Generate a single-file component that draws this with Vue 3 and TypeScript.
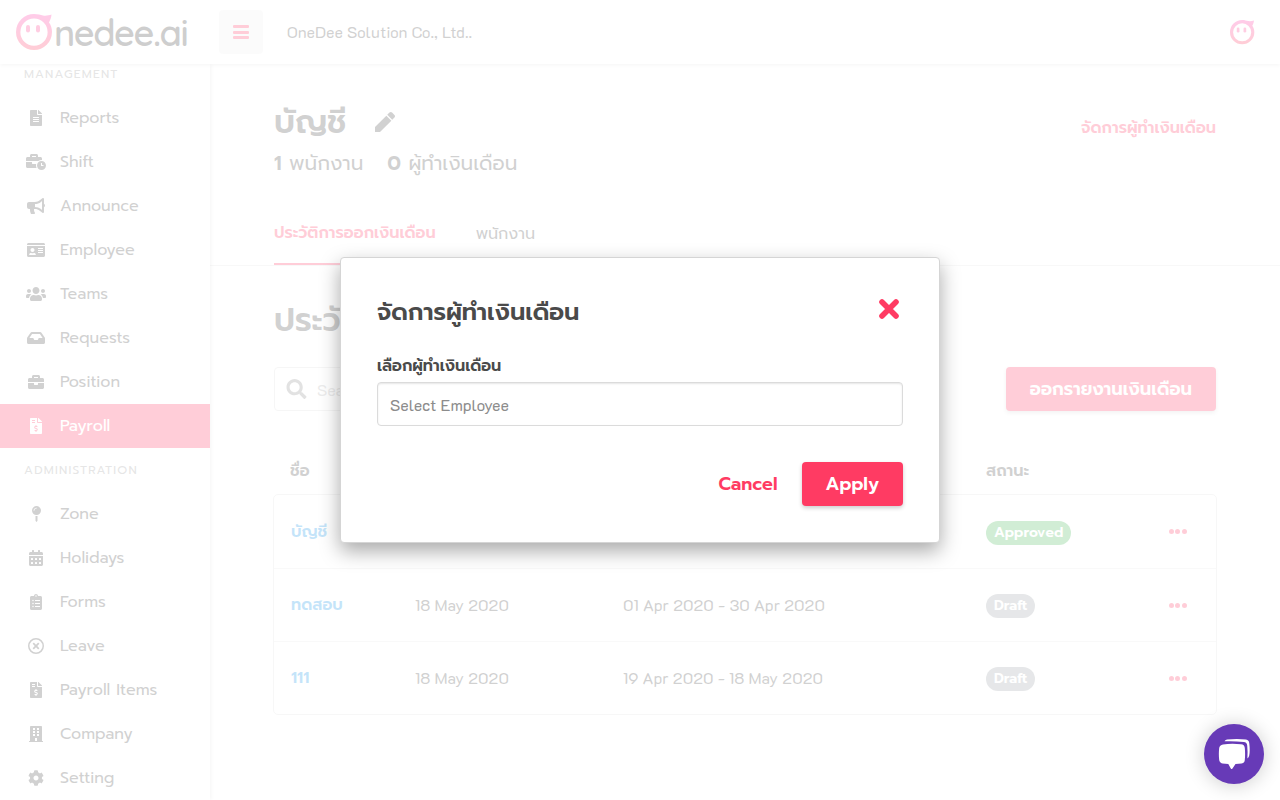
<script setup lang="ts">
interface Icon { vb: string; w: number; d: string }
interface MenuItem { label: string; icon: Icon; active?: boolean }
interface Row { name: string; date: string; period: string; status: string }

const mk = (w: number, d: string): Icon => ({ vb: `0 0 ${w} 512`, w: (w / 512) * 16, d })

const invoice = mk(384, 'M377 105L279.1 7c-4.5-4.5-10.6-7-17-7H256v128h128v-6.1c0-6.3-2.5-12.4-7-16.9zm-153 31V0H24C10.7 0 0 10.7 0 24v464c0 13.3 10.7 24 24 24h336c13.3 0 24-10.7 24-24V160H248c-13.2 0-24-10.8-24-24zM64 72c0-4.42 3.58-8 8-8h80c4.42 0 8 3.58 8 8v16c0 4.42-3.58 8-8 8H72c-4.42 0-8-3.58-8-8V72zm0 80v-16c0-4.42 3.58-8 8-8h80c4.42 0 8 3.58 8 8v16c0 4.42-3.58 8-8 8H72c-4.42 0-8-3.58-8-8zm144 263.88V440c0 4.42-3.58 8-8 8h-16c-4.42 0-8-3.58-8-8v-24.29c-11.29-.58-22.27-4.52-31.37-11.35-3.9-2.93-4.1-8.77-.57-12.14l11.75-11.21c2.77-2.64 6.89-2.76 10.13-.73 3.87 2.42 8.26 3.72 12.82 3.72h28.11c6.5 0 11.8-5.92 11.8-13.19 0-5.95-3.61-11.19-8.77-12.73l-45-13.5c-18.59-5.58-31.58-23.42-31.58-43.39 0-24.52 19.05-44.44 42.67-45.07V232c0-4.42 3.58-8 8-8h16c4.42 0 8 3.58 8 8v24.29c11.29.58 22.27 4.51 31.37 11.35 3.9 2.93 4.1 8.77.57 12.14l-11.75 11.21c-2.77 2.64-6.89 2.76-10.13.73-3.87-2.43-8.26-3.72-12.82-3.72h-28.11c-6.5 0-11.8 5.92-11.8 13.19 0 5.95 3.61 11.19 8.77 12.73l45 13.5c18.59 5.58 31.58 23.42 31.58 43.39 0 24.53-19.05 44.44-42.67 45.07z')

const management: MenuItem[] = [
  { label: 'Reports', icon: mk(384, 'M224 136V0H24C10.7 0 0 10.7 0 24v464c0 13.3 10.7 24 24 24h336c13.3 0 24-10.7 24-24V160H248c-13.200 0-24-10.800-24-24zm64 236c0 6.600-5.400 12-12 12H108c-6.600 0-12-5.400-12-12v-8c0-6.600 5.400-12 12-12h168c6.600 0 12 5.400 12 12v8zm0-64c0 6.600-5.400 12-12 12H108c-6.600 0-12-5.400-12-12v-8c0-6.600 5.400-12 12-12h168c6.600 0 12 5.400 12 12v8zm0-72v8c0 6.600-5.400 12-12 12H108c-6.600 0-12-5.400-12-12v-8c0-6.600 5.400-12 12-12h168c6.600 0 12 5.400 12 12zm96-114.100v6.100H256V0h6.100c6.400 0 12.500 2.500 17 7l97.900 98c4.500 4.500 7 10.600 7 16.900z') },
  { label: 'Shift', icon: mk(640, 'M496 224c-79.59 0-144 64.41-144 144s64.41 144 144 144 144-64.41 144-144-64.41-144-144-144zm64 150.29c0 5.34-4.37 9.71-9.71 9.71h-60.57c-5.34 0-9.71-4.37-9.71-9.71v-76.57c0-5.34 4.37-9.71 9.71-9.71h12.57c5.34 0 9.71 4.37 9.71 9.71V352h38.29c5.34 0 9.71 4.37 9.71 9.71v12.58zM496 192c5.4 0 10.72.33 16 .81V144c0-25.6-22.4-48-48-48h-80V48c0-25.6-22.4-48-48-48H176c-25.6 0-48 22.4-48 48v48H48c-25.6 0-48 22.4-48 48v80h395.12c28.6-20.09 63.35-32 100.88-32zM320 96H192V64h128v32zm6.82 224H208c-8.84 0-16-7.16-16-16v-48H0v144c0 25.6 22.4 48 48 48h291.43C327.1 423.96 320 396.82 320 368c0-16.66 2.48-32.72 6.82-48z') },
  { label: 'Announce', icon: mk(576, 'M576 240c0-23.63-12.95-44.04-32-55.12V32.01C544 23.26 537.02 0 512 0c-7.12 0-14.19 2.38-19.98 7.02l-85.03 68.03C364.28 109.19 310.66 128 256 128H64c-35.35 0-64 28.65-64 64v96c0 35.35 28.65 64 64 64h33.7c-1.39 10.48-2.18 21.14-2.18 32 0 39.77 9.26 77.35 25.56 110.94 5.19 10.69 16.52 17.06 28.4 17.06h74.28c26.05 0 41.69-29.84 25.9-50.56-16.4-21.52-26.15-48.36-26.15-77.44 0-11.11 1.62-21.79 4.41-32H256c54.66 0 108.28 18.81 150.98 52.95l85.03 68.03a32.023 32.023 0 0 0 19.98 7.02c24.92 0 32-22.78 32-32V295.13C563.05 284.04 576 263.63 576 240zm-96 141.42l-33.05-26.44C392.95 311.78 325.12 288 256 288v-96c69.12 0 136.95-23.78 190.95-66.98L480 98.58v282.84z') },
  { label: 'Employee', icon: mk(576, 'M528 32H48C21.5 32 0 53.5 0 80v16h576V80c0-26.5-21.5-48-48-48zM0 432c0 26.5 21.5 48 48 48h480c26.5 0 48-21.5 48-48V128H0v304zm352-232c0-4.4 3.6-8 8-8h144c4.4 0 8 3.6 8 8v16c0 4.4-3.6 8-8 8H360c-4.4 0-8-3.600-8-8v-16zm0 64c0-4.400 3.600-8 8-8h144c4.400 0 8 3.600 8 8v16c0 4.400-3.600 8-8 8H360c-4.400 0-8-3.600-8-8v-16zm0 64c0-4.400 3.600-8 8-8h144c4.400 0 8 3.600 8 8v16c0 4.400-3.600 8-8 8H360c-4.400 0-8-3.600-8-8v-16zM176 192c35.300 0 64 28.700 64 64s-28.700 64-64 64-64-28.700-64-64 28.700-64 64-64zM67.100 396.200C75.500 370.500 99.600 352 128 352h8.200c12.300 5.100 25.700 8 39.800 8s27.600-2.900 39.800-8h8.200c28.400 0 52.500 18.500 60.900 44.200 3.200 9.900-5.200 19.800-15.600 19.800H82.700c-10.400 0-18.800-10-15.600-19.800z') },
  { label: 'Teams', icon: mk(640, 'M96 224c35.3 0 64-28.7 64-64s-28.7-64-64-64-64 28.7-64 64 28.7 64 64 64zm448 0c35.3 0 64-28.7 64-64s-28.7-64-64-64-64 28.7-64 64 28.7 64 64 64zm32 32h-64c-17.6 0-33.5 7.1-45.1 18.6 40.3 22.1 68.9 62 75.1 109.4h66c17.7 0 32-14.3 32-32v-32c0-35.3-28.7-64-64-64zm-256 0c61.9 0 112-50.1 112-112S381.9 32 320 32 208 82.1 208 144s50.1 112 112 112zm76.800 32h-8.300c-20.800 10-43.900 16-68.500 16s-47.600-6-68.500-16h-8.300C179.600 288 128 339.600 128 403.200V432c0 26.500 21.500 48 48 48h288c26.500 0 48-21.500 48-48v-28.800c0-63.600-51.600-115.200-115.200-115.200zm-223.700-13.400C161.500 263.100 145.600 256 128 256H64c-35.300 0-64 28.700-64 64v32c0 17.700 14.300 32 32 32h65.900c6.300-47.400 34.900-87.300 75.200-109.400z') },
  { label: 'Requests', icon: mk(576, 'M567.938 243.908L462.25 85.374A48.003 48.003 0 0 0 422.311 64H153.689a48 48 0 0 0-39.938 21.374L8.062 243.908A47.994 47.994 0 0 0 0 270.533V400c0 26.51 21.49 48 48 48h480c26.51 0 48-21.49 48-48V270.533a47.994 47.994 0 0 0-8.062-26.625zM162.252 128h251.497l85.333 128H376l-32 64H232l-32-64H76.918l85.334-128z') },
  { label: 'Position', icon: mk(512, 'M320 336c0 8.84-7.16 16-16 16h-96c-8.84 0-16-7.16-16-16v-48H0v144c0 25.6 22.4 48 48 48h416c25.6 0 48-22.4 48-48V288H320v48zm144-208h-80V80c0-25.6-22.4-48-48-48H176c-25.6 0-48 22.4-48 48v48H48c-25.6 0-48 22.4-48 48v80h512v-80c0-25.600-22.400-48-48-48zm-144 0H192V96h128v32z') },
  { label: 'Payroll', icon: invoice, active: true },
]

const administration: MenuItem[] = [
  { label: 'Zone', icon: mk(288, 'M112 316.94v156.69l22.02 33.02c4.75 7.12 15.22 7.12 19.97 0L176 473.63V316.94c-10.39 1.92-21.06 3.06-32 3.06s-21.61-1.14-32-3.06zM144 0C64.47 0 0 64.47 0 144s64.47 144 144 144 144-64.47 144-144S223.53 0 144 0zm0 76c-37.5 0-68 30.5-68 68 0 6.62-5.38 12-12 12s-12-5.38-12-12c0-50.73 41.28-92 92-92 6.62 0 12 5.38 12 12s-5.38 12-12 12z') },
  { label: 'Holidays', icon: mk(448, 'M400 64h-48V16c0-8.8-7.2-16-16-16h-32c-8.8 0-16 7.2-16 16v48H160V16c0-8.8-7.2-16-16-16h-32c-8.8 0-16 7.2-16 16v48H48C21.5 64 0 85.5 0 112v48h448v-48c0-26.5-21.5-48-48-48zM0 192v272c0 26.5 21.5 48 48 48h352c26.5 0 48-21.5 48-48V192zM76 256h40q12 0 12 12v40q0 12-12 12h-40q-12 0-12-12v-40q0-12 12-12zM204 256h40q12 0 12 12v40q0 12-12 12h-40q-12 0-12-12v-40q0-12 12-12zM332 256h40q12 0 12 12v40q0 12-12 12h-40q-12 0-12-12v-40q0-12 12-12zM76 384h40q12 0 12 12v40q0 12-12 12h-40q-12 0-12-12v-40q0-12 12-12zM204 384h40q12 0 12 12v40q0 12-12 12h-40q-12 0-12-12v-40q0-12 12-12zM332 384h40q12 0 12 12v40q0 12-12 12h-40q-12 0-12-12v-40q0-12 12-12z') },
  { label: 'Forms', icon: mk(384, 'M336 64h-80c0-35.3-28.7-64-64-64s-64 28.7-64 64H48C21.5 64 0 85.5 0 112v352c0 26.5 21.5 48 48 48h288c26.5 0 48-21.5 48-48V112c0-26.500-21.500-48-48-48zM96 424c-13.300 0-24-10.700-24-24s10.700-24 24-24 24 10.700 24 24-10.700 24-24 24zm0-96c-13.300 0-24-10.700-24-24s10.700-24 24-24 24 10.700 24 24-10.700 24-24 24zm0-96c-13.300 0-24-10.700-24-24s10.700-24 24-24 24 10.700 24 24-10.700 24-24 24zm96-192c13.300 0 24 10.700 24 24s-10.700 24-24 24-24-10.700-24-24 10.700-24 24-24zm128 368c0 4.400-3.600 8-8 8H168c-4.400 0-8-3.600-8-8v-16c0-4.400 3.600-8 8-8h144c4.400 0 8 3.600 8 8v16zm0-96c0 4.400-3.600 8-8 8H168c-4.400 0-8-3.600-8-8v-16c0-4.400 3.600-8 8-8h144c4.400 0 8 3.600 8 8v16zm0-96c0 4.400-3.600 8-8 8H168c-4.400 0-8-3.600-8-8v-16c0-4.400 3.600-8 8-8h144c4.400 0 8 3.600 8 8v16z') },
  { label: 'Leave', icon: mk(512, 'M256 0a256 256 0 1 0 0 512a256 256 0 1 0 0-512zM256 48a208 208 0 1 1 0 416a208 208 0 1 1 0-416zM357.800 193.800L295.600 256l62.200 62.200c4.700 4.700 4.700 12.300 0 17l-22.600 22.600c-4.700 4.700-12.300 4.700-17 0L256 295.600l-62.200 62.200c-4.700 4.700-12.300 4.700-17 0l-22.600-22.600c-4.700-4.700-4.700-12.300 0-17l62.200-62.200-62.200-62.200c-4.700-4.700-4.700-12.300 0-17l22.600-22.600c4.700-4.700 12.300-4.700 17 0l62.200 62.200 62.200-62.200c4.700-4.700 12.300-4.700 17 0l22.600 22.600c4.700 4.700 4.700 12.300 0 17z') },
  { label: 'Payroll Items', icon: invoice },
  { label: 'Company', icon: mk(448, 'M436 480h-20V24c0-13.300-10.700-24-24-24H56C42.700 0 32 10.700 32 24v456H12c-6.600 0-12 5.400-12 12v20h448v-20c0-6.600-5.400-12-12-12zM128 64h64v64h-64zM256 64h64v64h-64zM128 160h64v64h-64zM256 160h64v64h-64zM128 256h64v64h-64zM256 256h64v64h-64zM192 384h64v96h-64z') },
  { label: 'Setting', icon: mk(512, 'M487.4 315.700l-42.600-24.600c4.300-23.200 4.300-47 0-70.200l42.600-24.600c4.900-2.800 7.100-8.600 5.500-14-11.100-35.600-30-67.800-54.700-94.600-3.800-4.100-10-5.100-14.800-2.300L380.800 110c-17.900-15.400-38.500-27.300-60.800-35.100V25.800c0-5.600-3.900-10.500-9.400-11.700-36.700-8.200-74.300-7.800-109.200 0-5.500 1.200-9.400 6.100-9.400 11.700V75c-22.200 7.900-42.800 19.800-60.800 35.100L88.700 85.500c-4.900-2.800-11-1.900-14.800 2.300-24.700 26.700-43.600 58.900-54.700 94.600-1.700 5.400.6 11.200 5.500 14L67.300 221c-4.300 23.200-4.300 47 0 70.200l-42.600 24.600c-4.900 2.800-7.100 8.600-5.500 14 11.100 35.600 30 67.800 54.700 94.600 3.800 4.100 10 5.100 14.800 2.300l42.600-24.600c17.900 15.400 38.500 27.300 60.800 35.100v49.200c0 5.600 3.900 10.500 9.400 11.700 36.700 8.200 74.300 7.800 109.200 0 5.500-1.200 9.400-6.100 9.400-11.700v-49.200c22.200-7.900 42.800-19.800 60.800-35.100l42.600 24.600c4.900 2.800 11 1.900 14.800-2.300 24.700-26.700 43.600-58.900 54.700-94.600 1.500-5.500-.7-11.300-5.600-14.100zM256 336c-44.100 0-80-35.900-80-80s35.900-80 80-80 80 35.900 80 80-35.900 80-80 80z') },
]

const sections = [
  { title: 'MANAGEMENT', items: management },
  { title: 'ADMINISTRATION', items: administration },
]

const rows: Row[] = [
  { name: 'บัญชี', date: '18 May 2020', period: '01 May 2020 - 31 May 2020', status: 'Approved' },
  { name: 'ทดสอบ', date: '18 May 2020', period: '01 Apr 2020 - 30 Apr 2020', status: 'Draft' },
  { name: '111', date: '18 May 2020', period: '19 Apr 2020 - 18 May 2020', status: 'Draft' },
]
</script>

<template>
  <div class="app">
    <header class="topbar">
      <div class="logo">
        <svg class="logo-mark" viewBox="0 0 37 37">
          <defs>
            <linearGradient id="brand" x1="0" y1="0" x2="0" y2="1">
              <stop offset="0" stop-color="#ff35a8" />
              <stop offset="1" stop-color="#ff3b5c" />
            </linearGradient>
          </defs>
          <path fill="url(#brand)" fill-rule="evenodd" d="M18 0C22 0 24.500 1 27 1.500C30 2 33 1.300 35.500.6C35.300 4 34 6.500 33 8.500C35 11 36 14.500 36 18A18 18 0 1 1 18 0zM18 4.600A13.600 13.600 0 1 0 18 31.800A13.600 13.600 0 1 0 18 4.600z" />
          <rect x="10" y="11" width="4" height="7.500" rx="2" fill="#ff3b8c" />
          <rect x="20" y="11" width="4" height="7.500" rx="2" fill="#ff3b8c" />
        </svg>
        <span class="logo-text">nedee.ai</span>
      </div>
      <button class="burger" aria-label="Menu"><i /><i /><i /></button>
      <span class="company">OneDee Solution Co., Ltd..</span>
      <svg class="avatar" viewBox="0 0 37 37">
        <path fill="url(#brand)" fill-rule="evenodd" d="M18 0C22 0 24.500 1 27 1.500C30 2 33 1.300 35.500.6C35.300 4 34 6.500 33 8.500C35 11 36 14.500 36 18A18 18 0 1 1 18 0zM18 4.800A13.400 13.400 0 1 0 18 31.600A13.400 13.400 0 1 0 18 4.800z" />
        <rect x="10" y="11" width="4" height="7.500" rx="2" fill="#ff3b8c" />
        <rect x="20" y="11" width="4" height="7.500" rx="2" fill="#ff3b8c" />
      </svg>
    </header>

    <div class="body">
      <nav class="sidebar">
        <div v-for="s in sections" :key="s.title" class="section">
          <div class="section-title">{{ s.title }}</div>
          <a v-for="m in s.items" :key="m.label" class="item" :class="{ active: m.active }">
            <span class="icon">
              <svg :viewBox="m.icon.vb" :width="m.icon.w" height="16"><path :d="m.icon.d" fill="currentColor" fill-rule="evenodd" /></svg>
            </span>
            <span>{{ m.label }}</span>
          </a>
        </div>
      </nav>

      <main class="main">
        <div class="head">
          <div>
            <div class="title-line">
              <h1>บัญชี</h1>
              <svg class="pen" viewBox="0 0 512 512"><path fill="currentColor" d="M290.740 93.240l128.020 128.020-290.740 290.740H0V384zM497.940 74.170l-60.110-60.110c-18.750-18.750-49.160-18.750-67.910 0l-56.550 56.550 128.020 128.020 56.550-56.550c18.750-18.760 18.750-49.160 0-67.910z" /></svg>
            </div>
            <div class="counts">
              <span><b>1</b> พนักงาน</span>
              <span><b>0</b> ผู้ทำเงินเดือน</span>
            </div>
          </div>
          <a class="manage">จัดการผู้ทำเงินเดือน</a>
        </div>

        <div class="tabs">
          <a class="tab current">ประวัติการออกเงินเดือน</a>
          <a class="tab">พนักงาน</a>
        </div>

        <div class="content">
          <h2>ประวัติการออกเงินเดือน</h2>
          <div class="tools">
            <div class="search">
              <svg viewBox="0 0 512 512"><path fill="currentColor" d="M505 442.700L405.300 343c-4.500-4.500-10.600-7-17-7H372c27.600-35.300 44-79.700 44-128C416 93.100 322.900 0 208 0S0 93.100 0 208s93.100 208 208 208c48.300 0 92.700-16.400 128-44v16.300c0 6.400 2.500 12.500 7 17l99.700 99.700c9.400 9.400 24.600 9.400 33.900 0l28.300-28.300c9.400-9.400 9.400-24.600.1-34zM208 336c-70.700 0-128-57.200-128-128 0-70.700 57.200-128 128-128 70.700 0 128 57.200 128 128 0 70.700-57.200 128-128 128z" /></svg>
              <span>Search</span>
            </div>
            <button class="primary">ออกรายงานเงินเดือน</button>
          </div>

          <div class="thead">
            <span>ชื่อ</span><span /><span /><span>สถานะ</span>
          </div>
          <div class="table">
            <div v-for="r in rows" :key="r.name" class="row">
              <a class="name">{{ r.name }}</a>
              <span class="data">{{ r.date }}</span>
              <span class="data">{{ r.period }}</span>
              <span class="status"><span class="badge" :class="r.status.toLowerCase()">{{ r.status }}</span></span>
              <span class="more"><i /><i /><i /></span>
            </div>
          </div>
        </div>
      </main>
    </div>

    <div class="overlay">
      <section class="modal">
        <div class="modal-head">
          <h3>จัดการผู้ทำเงินเดือน</h3>
          <svg class="close" viewBox="0 0 22 22"><path d="M4 4L18 18M18 4L4 18" stroke="currentColor" stroke-width="5.600" stroke-linecap="round" /></svg>
        </div>
        <label class="label">เลือกผู้ทำเงินเดือน</label>
        <div class="select">Select Employee</div>
        <div class="actions">
          <button class="cancel">Cancel</button>
          <button class="primary apply">Apply</button>
        </div>
      </section>
    </div>

    <button class="chat" aria-label="Chat">
      <svg viewBox="0 0 60 60">
        <path fill="#fff" d="M19 20.500Q27 19 37 20.200Q40.500 20.400 40.800 24Q41.400 30 40.800 36Q40.500 39.200 37.500 39.400L31.500 40L28.300 44.800Q27.500 45.400 26.800 44.500L24.300 40L18.500 39.400Q15.600 39 15.200 36Q14.500 30 15.200 24Q15.600 21 19 20.500z" />
        <path fill="#fff" d="M20.500 17.300Q21 16 23 15.600Q33 14.600 42 15.600Q45 16 45.300 19.500Q46.200 27 45.200 31.500Q44.800 33.600 43.400 34.500Q43.800 27 43.200 21.500Q42.900 18.400 39.800 18.100Q30 16.800 20.500 17.300z" />
      </svg>
    </button>
  </div>
</template>

<style>
body { overflow: hidden; }
</style>

<style scoped>
.app {
  position: relative;
  height: 800px;
  overflow: hidden;
  background: #fff;
  color: #4a4a4a;
  font: 400 16px/24px Prompt, 'Noto Sans Thai', 'Noto Sans', sans-serif;
}
*, *::before { box-sizing: border-box; }
h1, h2, h3 { margin: 0; font-weight: 600; }
button { border: 0; padding: 0; background: none; font: inherit; color: inherit; }

.topbar {
  position: relative;
  z-index: 2;
  display: flex;
  align-items: center;
  height: 64px;
  padding: 0 25px 0 16px;
  background: #fff;
  box-shadow: 0 1px 4px rgba(0, 0, 0, .16);
}
.logo { display: flex; align-items: center; width: 203px; }
.logo-mark { width: 37px; height: 37px; flex: none; }
.logo-text {
  margin: 2px 0 0 1px;
  font: 600 36px/40px Quicksand, 'Varela Round', sans-serif;
  letter-spacing: -1.500px;
  color: #3c3c3c;
}
.burger {
  display: flex;
  flex-direction: column;
  align-items: center;
  justify-content: center;
  gap: 2.500px;
  width: 44px;
  height: 44px;
  border-radius: 4px;
  background: #f0f0f0;
}
.burger i { width: 16px; height: 3px; border-radius: 1px; background: #ff3b63; }
.company { margin-left: 24px; font-family: K2D, 'Noto Sans', sans-serif; }
.avatar { width: 25px; height: 25px; margin-left: auto; }

.body { display: flex; height: 736px; }
.sidebar {
  position: relative;
  z-index: 1;
  flex: none;
  width: 210px;
  overflow: hidden;
  background: #fff;
  box-shadow: 1px 0 4px rgba(0, 0, 0, .16);
}
.section:first-child { margin-top: -12px; }
.section-title {
  height: 44px;
  padding-left: 24px;
  line-height: 44px;
  font-size: 12px;
  letter-spacing: 1.200px;
  color: #9a9a9a;
}
.item { display: flex; align-items: center; height: 44px; padding-left: 24px; }
.item.active { background: #ff3b63; color: #fff; }
.icon { display: flex; justify-content: center; width: 24px; margin-right: 12px; }

.main { flex: 1; background: #fff; }
.head { display: flex; justify-content: space-between; padding: 32px 64px 0; height: 137px; }
.title-line { display: flex; align-items: center; height: 50px; }
h1 { padding-top: 3px; font-size: 32px; line-height: 50px; }
.pen { width: 20px; height: 20px; margin: 2px 0 0 28px; }
.counts { display: flex; gap: 24px; font-size: 20px; line-height: 34px; }
.counts b { font-weight: 600; }
.manage { padding-top: 20px; color: #ff3b63; font-weight: 600; }
.tabs { display: flex; gap: 40px; height: 65px; padding: 0 64px; border-bottom: 1px solid #e2e2e2; }
.tab { height: 64px; line-height: 66px; }
.tab.current { color: #ff3b63; font-weight: 600; line-height: 64px; border-bottom: 2px solid #ff3b63; }

.content { padding: 31px 64px 0; }
h2 { font-size: 32px; line-height: 48px; }
.tools { display: flex; justify-content: space-between; margin-top: 22px; }
.search {
  display: flex;
  align-items: center;
  gap: 10px;
  width: 300px;
  height: 44px;
  padding-left: 11px;
  border: 1px solid #dbdbdb;
  border-radius: 4px;
  background: #fff;
  font-family: K2D, 'Noto Sans', sans-serif;
  color: #b5b5b5;
}
.search svg { width: 21px; height: 20px; color: #8c8c8c; }
.search span { padding-top: 2px; }
.primary {
  height: 44px;
  padding: 0 24px;
  border-radius: 4px;
  background: #ff3b63;
  color: #fff;
  font-size: 18px;
  font-weight: 600;
  box-shadow: 0 2px 4px rgba(0, 0, 0, .2);
}
.thead, .row { display: grid; grid-template-columns: 124px 208px 363px 183px auto; align-items: center; }
.thead { height: 48px; margin-top: 35px; padding: 2px 0 0 16px; font-weight: 600; }
.thead span:last-child { padding-left: 1px; }
.table { margin: 0 -1px; border: 1px solid #e0e0e0; border-radius: 5px; background: #fff; }
.row { height: 73px; padding-left: 17px; }
.row + .row { border-top: 1px solid #e6e6e6; }
.name { color: #1795e8; font-weight: 600; }
.data { font-family: K2D, 'Noto Sans', sans-serif; }
.status { padding-top: 2px; }
.badge {
  display: inline-block;
  height: 24px;
  padding: 0 8px;
  border-radius: 12px;
  font-size: 14px;
  font-weight: 600;
  vertical-align: middle;
  color: #fff;
}
.badge.approved { background: #48b85a; }
.badge.draft { background: #9ba1a6; }
.more { display: flex; gap: 1.300px; }
.more i { width: 5px; height: 5px; border-radius: 50%; background: #ff3b63; }

.overlay {
  position: absolute;
  inset: 0;
  z-index: 3;
  display: flex;
  align-items: center;
  justify-content: center;
  background: rgba(255, 255, 255, .75);
}
.modal {
  width: 600px;
  height: 286px;
  padding: 35px 36px;
  border: 1px solid #d5d5d5;
  border-radius: 4px;
  background: #fff;
  box-shadow: 0 8px 20px rgba(0, 0, 0, .34);
}
.modal-head { display: flex; justify-content: space-between; height: 60px; }
h3 { font-size: 24px; line-height: 38px; }
.close { width: 22px; height: 22px; margin: 4.500px 3.500px 0 0; color: #ff3b63; }
.label { display: block; height: 29px; line-height: 26px; font-weight: 600; }
.select {
  height: 44px;
  padding-left: 12px;
  border: 1px solid #dbdbdb;
  border-radius: 4px;
  line-height: 43px;
  font-family: K2D, 'Noto Sans', sans-serif;
  color: #8c8c8c;
  box-shadow: inset 0 1px 2px rgba(10, 10, 10, .1);
}
.actions { display: flex; justify-content: flex-end; gap: 24px; margin-top: 36px; }
.cancel { color: #ff3b63; font-size: 18px; font-weight: 600; }

.chat {
  position: absolute;
  right: 16px;
  bottom: 16px;
  z-index: 4;
  width: 60px;
  height: 60px;
  border-radius: 50%;
  background: #673ab7;
  box-shadow: 0 1px 20px rgba(0, 0, 0, .2);
}
.chat svg { display: block; width: 60px; height: 60px; }
</style>
